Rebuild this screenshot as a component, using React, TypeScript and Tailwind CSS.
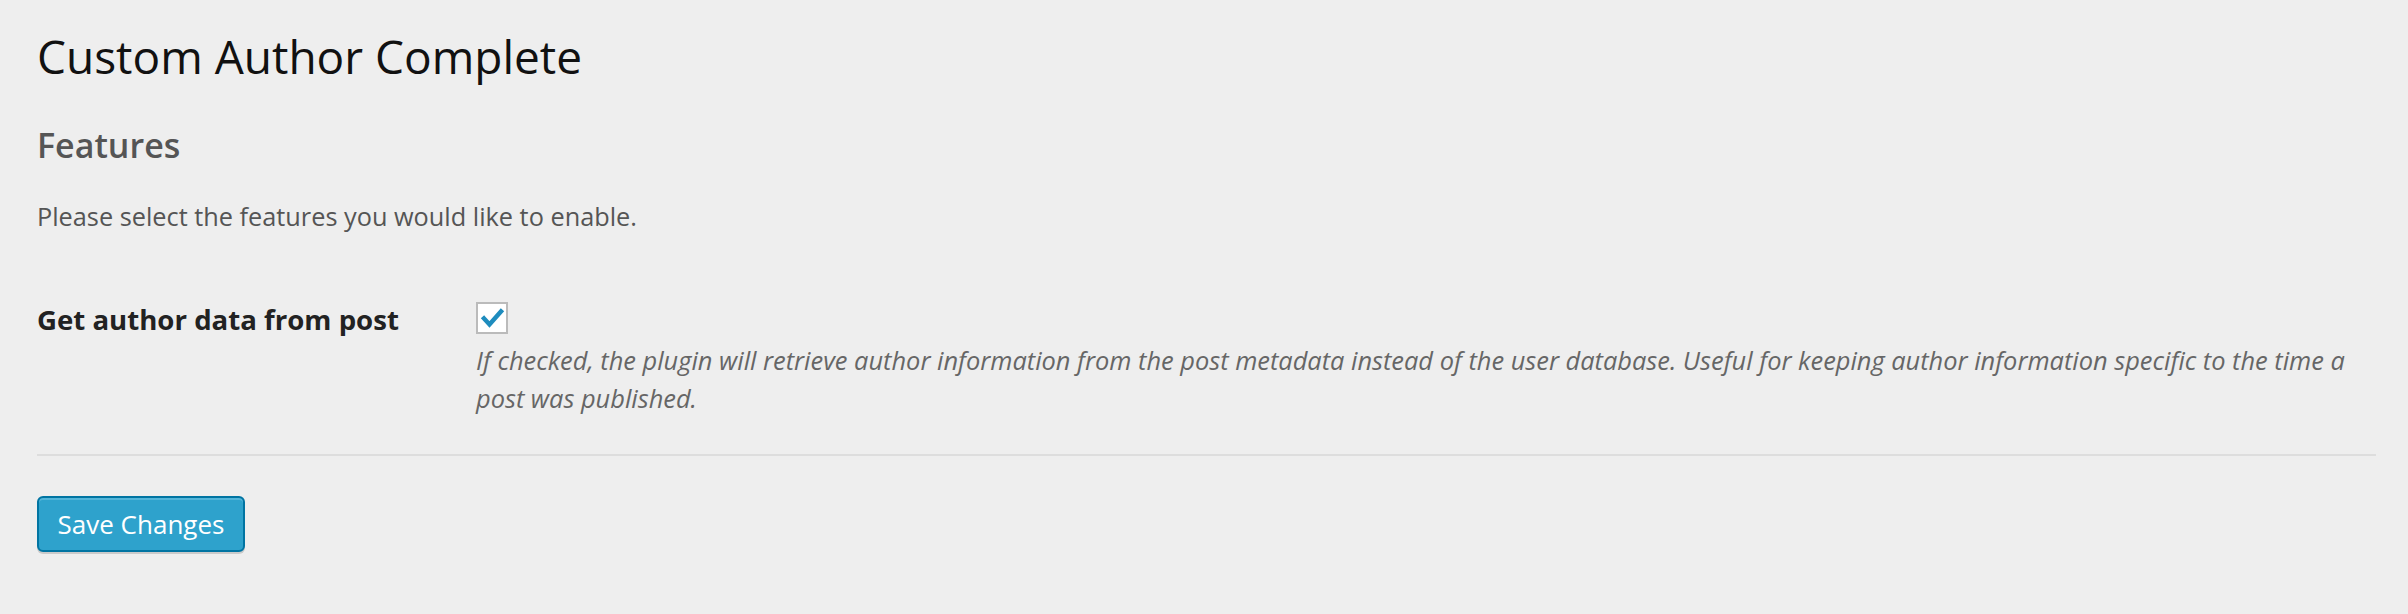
export default function App() {
  return (
    <div className="min-h-screen bg-[#eeeeee] pl-[37px] pr-[32px] pt-[25px] font-['Open_Sans',sans-serif]">
      <h1 className="text-[46px] leading-[62px] font-normal text-[#111111]">Custom Author Complete</h1>

      <h2 className="mt-[35px] text-[34px] leading-[46px] font-semibold text-[#555555]">Features</h2>

      <p className="mt-[29px] text-[25.3px] leading-[39px] text-[#555555]">
        Please select the features you would like to enable.
      </p>

      <div className="mt-[64px] grid grid-cols-[439px_1fr]">
        <div className="text-[27.6px] leading-[39px] font-bold text-[#222222]">Get author data from post</div>
        <div>
          <div className="mt-[2px] flex h-[32px] w-[32px] items-center justify-center border-2 border-[#bbbbbb] bg-white">
            <svg width="28" height="28" viewBox="0 0 28 28" fill="none">
              <path d="M6 14.5 L11.5 20.5 L23 7.5" stroke="#1e8cbe" strokeWidth="4.5" strokeLinecap="square" />
            </svg>
          </div>
          <p className="mt-[7px] text-[25.4px] leading-[38px] italic text-[#666666]">
            If checked, the plugin will retrieve author information from the post metadata instead of the user database. Useful for keeping author information specific to the time a post was published.
          </p>
        </div>
      </div>

      <div className="mt-[37px] h-[2px] bg-[#dddddd]" />

      <button className="mt-[40px] flex h-[56px] w-[208px] items-center justify-center rounded-[6px] border-2 border-[#0074a2] bg-[#2ea2cc] text-[26px] text-white shadow-[0_2px_0_rgba(0,0,0,0.15),inset_0_2px_0_rgba(120,200,230,0.5)]">
        Save Changes
      </button>
    </div>
  )
}
